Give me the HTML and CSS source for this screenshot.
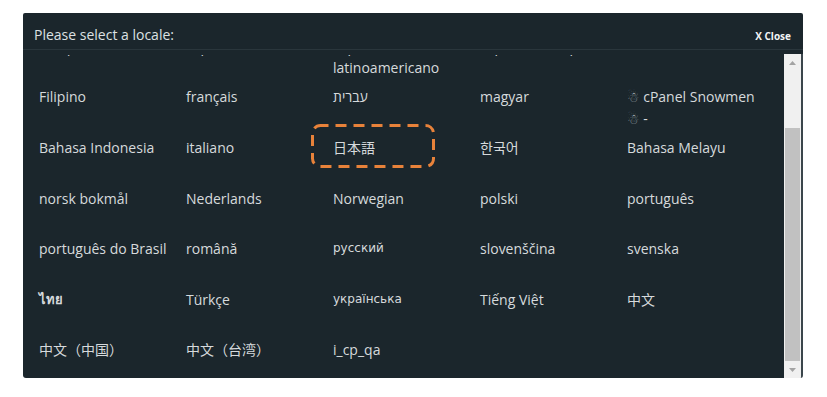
FILE: index.html
```html
<!DOCTYPE html>
<html lang="en">

<head>
    <meta charset="UTF-8">
    <meta name="viewport" content="width=device-width, initial-scale=1.0">
    <title>Select a locale</title>
    <link rel="stylesheet" href="styles.css">
</head>

<body>
    <div class="dialog">
        <div class="dialog-header">
            <span class="dialog-title">Please select a locale:</span>
            <a class="dialog-close" href="#">X Close</a>
        </div>
        <div class="dialog-body">
            <div class="locale-viewport">
                <ul class="locale-grid">
                    <li>Ελληνικά</li>
                    <li>español</li>
                    <li>español latinoamericano</li>
                    <li>español de España</li>
                    <li>suomi</li>

                    <li>Filipino</li>
                    <li>français</li>
                    <li>עברית</li>
                    <li>magyar</li>
                    <li><span class="glyph">☃</span> cPanel Snowmen <span class="glyph">☃</span>&nbsp;-</li>

                    <li>Bahasa Indonesia</li>
                    <li>italiano</li>
                    <li class="current">日本語
                        <svg class="focus-ring" width="124" height="44" viewBox="0 0 124 44">
                            <rect x="1.5" y="1.5" width="121" height="41" rx="8" ry="8" fill="none"
                                stroke="#e8823a" stroke-width="3" stroke-dasharray="11 7" stroke-dashoffset="3" />
                        </svg>
                    </li>
                    <li>한국어</li>
                    <li>Bahasa Melayu</li>

                    <li>norsk bokmål</li>
                    <li>Nederlands</li>
                    <li>Norwegian</li>
                    <li>polski</li>
                    <li>português</li>

                    <li>português do Brasil</li>
                    <li>română</li>
                    <li class="alt-font">русский</li>
                    <li>slovenščina</li>
                    <li>svenska</li>

                    <li class="thai">ไทย</li>
                    <li>Türkçe</li>
                    <li class="alt-font">українська</li>
                    <li>Tiếng Việt</li>
                    <li lang="zh-CN">中文</li>

                    <li lang="zh-CN">中文（中国）</li>
                    <li lang="zh-CN">中文（台湾）</li>
                    <li>i_cp_qa</li>
                </ul>
            </div>
            <div class="scrollbar">
                <div class="sb-button">
                    <svg width="7" height="4" viewBox="0 0 7 4"><polygon points="3.5,0 7,4 0,4" fill="#a3a3a3" /></svg>
                </div>
                <div class="sb-track">
                    <div class="sb-thumb"></div>
                </div>
                <div class="sb-button">
                    <svg width="7" height="4" viewBox="0 0 7 4"><polygon points="0,0 7,0 3.5,4" fill="#a3a3a3" /></svg>
                </div>
            </div>
        </div>
    </div>
</body>

</html>
```

FILE: styles.css
```css
body {
    margin: 0;
    background: #fff;
    font-family: 'Open Sans', 'Noto Sans CJK JP', sans-serif;
}

.dialog {
    margin: 13px 0 0 23px;
    width: 780px;
    height: 365px;
    background: #1b262c;
    border-radius: 2px 2px 3px 3px;
    display: flex;
    flex-direction: column;
    overflow: hidden;
}

.dialog-header {
    display: flex;
    align-items: baseline;
    justify-content: space-between;
    padding: 13px 12px 4px 11px;
    border-bottom: 1px solid #2a363c;
    line-height: 18px;
}

.dialog-title {
    font-size: 14px;
    color: #dde1e3;
}

.dialog-close {
    font-size: 10px;
    font-weight: 700;
    color: #f2f4f5;
    text-decoration: none;
}

.dialog-body {
    flex: 1;
    display: flex;
    min-height: 0;
    padding-top: 4px;
}

.locale-viewport {
    flex: 1;
    overflow: hidden;
    display: flex;
    flex-direction: column;
    justify-content: flex-end;
    margin-top: 1px;
}

.locale-grid {
    flex-shrink: 0;
    list-style: none;
    margin: 0;
    padding: 0 0 3px 16px;
    display: grid;
    grid-template-columns: repeat(5, 147px);
    grid-auto-rows: 50.6px;
}

.locale-grid li {
    position: relative;
    padding: 15px 10px 0 0;
    font-size: 14px;
    line-height: 21px;
    color: #d6dadc;
}

.locale-grid li:lang(zh-CN) {
    font-family: 'Open Sans', 'Noto Sans CJK SC', sans-serif;
}

.locale-grid .alt-font {
    font-family: 'DejaVu Sans', sans-serif;
    font-size: 12px;
}

.locale-grid .thai {
    font-weight: 700;
    font-size: 13px;
}

.glyph {
    font-family: 'DejaVu Sans', sans-serif;
    font-size: 14px;
    color: #9aa3a8;
}

.focus-ring {
    position: absolute;
    left: -22px;
    top: 1.5px;
}

.scrollbar {
    width: 17px;
    background: #f0f0f0;
    border-right: 2px solid #3b464c;
    display: flex;
    flex-direction: column;
}

.sb-button {
    height: 17px;
    display: flex;
    align-items: center;
    justify-content: center;
}

.sb-track {
    flex: 1;
    display: flex;
    flex-direction: column;
    justify-content: flex-end;
}

.sb-thumb {
    height: 233px;
    margin: 0 1px;
    background: #c1c1c1;
}
```
